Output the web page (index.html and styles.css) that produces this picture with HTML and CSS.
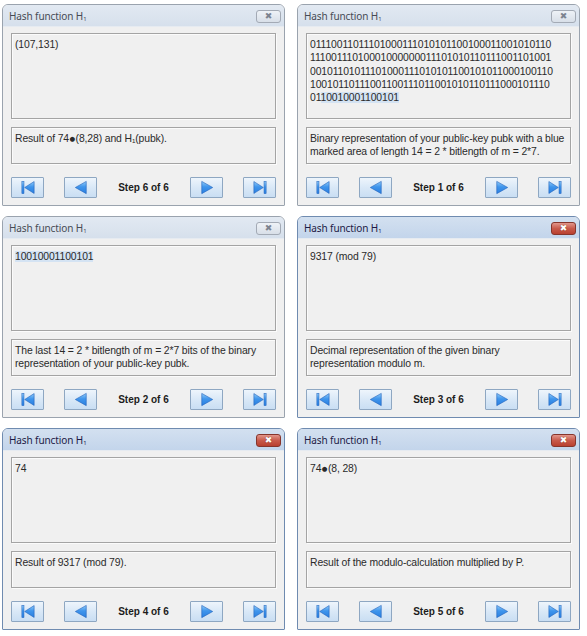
FILE: index.html
```html
<!DOCTYPE html>
<html>
<head>
<meta charset="utf-8">
<link rel="stylesheet" href="styles.css">
</head>
<body>
<svg width="0" height="0" class="defs">
  <defs>
    <linearGradient id="tri" x1="0" y1="0" x2="0" y2="1">
      <stop offset="0" stop-color="#8fcbf9"/>
      <stop offset="0.45" stop-color="#3f95ec"/>
      <stop offset="1" stop-color="#2a7fe0"/>
    </linearGradient>
    <symbol id="i-first" viewBox="0 0 16 16"><rect x="1" y="1" width="2.4" height="14" fill="url(#tri)" stroke="#2464bd" stroke-width="0.6"/><polygon points="4.2,8 15,1.2 15,14.8" fill="url(#tri)" stroke="#2464bd" stroke-width="0.7" stroke-linejoin="round"/></symbol>
    <symbol id="i-prev" viewBox="0 0 16 16"><polygon points="1.5,8 14,1 14,15" fill="url(#tri)" stroke="#2464bd" stroke-width="0.7" stroke-linejoin="round"/></symbol>
    <symbol id="i-next" viewBox="0 0 16 16"><polygon points="14.5,8 2,1 2,15" fill="url(#tri)" stroke="#2464bd" stroke-width="0.7" stroke-linejoin="round"/></symbol>
    <symbol id="i-last" viewBox="0 0 16 16"><polygon points="11.8,8 1,1.2 1,14.8" fill="url(#tri)" stroke="#2464bd" stroke-width="0.7" stroke-linejoin="round"/><rect x="12.6" y="1" width="2.4" height="14" fill="url(#tri)" stroke="#2464bd" stroke-width="0.6"/></symbol>
  </defs>
</svg>
<div class="desk">

  <div class="win">
    <div class="title"><span class="caption">Hash function H<sub class="sub">1</sub></span><span class="close">✖</span></div>
    <div class="box main"><div class="txt">(107,131)</div></div>
    <div class="box desc"><div class="txt">Result of 74<span class="dot">●</span>(8,28) and H₁(pubk).</div></div>
    <div class="nav">
      <button class="btn"><svg class="ico"><use href="#i-first"/></svg></button>
      <button class="btn"><svg class="ico"><use href="#i-prev"/></svg></button>
      <span class="step">Step 6 of 6</span>
      <button class="btn"><svg class="ico"><use href="#i-next"/></svg></button>
      <button class="btn"><svg class="ico"><use href="#i-last"/></svg></button>
    </div>
  </div>

  <div class="win">
    <div class="title"><span class="caption">Hash function H<sub class="sub">1</sub></span><span class="close">✖</span></div>
    <div class="box main"><div class="txt">01110011011101000111010101100100011001010110<br>11100111010001000000011101010110111001101001<br>00101101011101000111010101100101011000100110<br>10010110111001100111011001010110111000101110<br>01<span class="sel">10010001100101</span></div></div>
    <div class="box desc"><div class="txt">Binary representation of your public-key pubk with a blue marked area of length 14 = 2 * bitlength of m = 2*7.</div></div>
    <div class="nav">
      <button class="btn"><svg class="ico"><use href="#i-first"/></svg></button>
      <button class="btn"><svg class="ico"><use href="#i-prev"/></svg></button>
      <span class="step">Step 1 of 6</span>
      <button class="btn"><svg class="ico"><use href="#i-next"/></svg></button>
      <button class="btn"><svg class="ico"><use href="#i-last"/></svg></button>
    </div>
  </div>

  <div class="win">
    <div class="title"><span class="caption">Hash function H<sub class="sub">1</sub></span><span class="close">✖</span></div>
    <div class="box main"><div class="txt"><span class="sel">10010001100101</span></div></div>
    <div class="box desc"><div class="txt">The last 14 = 2 * bitlength of m = 2*7 bits of the binary representation of your public-key pubk.</div></div>
    <div class="nav">
      <button class="btn"><svg class="ico"><use href="#i-first"/></svg></button>
      <button class="btn"><svg class="ico"><use href="#i-prev"/></svg></button>
      <span class="step">Step 2 of 6</span>
      <button class="btn"><svg class="ico"><use href="#i-next"/></svg></button>
      <button class="btn"><svg class="ico"><use href="#i-last"/></svg></button>
    </div>
  </div>

  <div class="win active">
    <div class="title"><span class="caption">Hash function H<sub class="sub">1</sub></span><span class="close">✖</span></div>
    <div class="box main"><div class="txt">9317 (mod 79)</div></div>
    <div class="box desc"><div class="txt">Decimal representation of the given binary<br>representation modulo m.</div></div>
    <div class="nav">
      <button class="btn"><svg class="ico"><use href="#i-first"/></svg></button>
      <button class="btn"><svg class="ico"><use href="#i-prev"/></svg></button>
      <span class="step">Step 3 of 6</span>
      <button class="btn"><svg class="ico"><use href="#i-next"/></svg></button>
      <button class="btn"><svg class="ico"><use href="#i-last"/></svg></button>
    </div>
  </div>

  <div class="win active">
    <div class="title"><span class="caption">Hash function H<sub class="sub">1</sub></span><span class="close">✖</span></div>
    <div class="box main"><div class="txt">74</div></div>
    <div class="box desc"><div class="txt">Result of 9317 (mod 79).</div></div>
    <div class="nav">
      <button class="btn"><svg class="ico"><use href="#i-first"/></svg></button>
      <button class="btn"><svg class="ico"><use href="#i-prev"/></svg></button>
      <span class="step">Step 4 of 6</span>
      <button class="btn"><svg class="ico"><use href="#i-next"/></svg></button>
      <button class="btn"><svg class="ico"><use href="#i-last"/></svg></button>
    </div>
  </div>

  <div class="win active">
    <div class="title"><span class="caption">Hash function H<sub class="sub">1</sub></span><span class="close">✖</span></div>
    <div class="box main"><div class="txt">74<span class="dot">●</span>(8, 28)</div></div>
    <div class="box desc"><div class="txt">Result of the modulo-calculation multiplied by P.</div></div>
    <div class="nav">
      <button class="btn"><svg class="ico"><use href="#i-first"/></svg></button>
      <button class="btn"><svg class="ico"><use href="#i-prev"/></svg></button>
      <span class="step">Step 5 of 6</span>
      <button class="btn"><svg class="ico"><use href="#i-next"/></svg></button>
      <button class="btn"><svg class="ico"><use href="#i-last"/></svg></button>
    </div>
  </div>

</div>
</body>
</html>
```

FILE: styles.css
```css
html, body {
  margin: 0;
  padding: 0;
  background: #ffffff;
}

.defs {
  position: absolute;
  width: 0;
  height: 0;
}

.desk {
  display: grid;
  grid-template-columns: 283px 283px;
  grid-auto-rows: 202px;
  column-gap: 12px;
  row-gap: 10px;
  padding: 4px 0 0 2px;
}

.win {
  box-sizing: border-box;
  height: 202px;
  border: 1px solid #9aa3ae;
  border-radius: 6px 6px 1px 1px;
  background: #f0f0f0;
  display: flex;
  flex-direction: column;
  padding: 0 8px 7px 8px;
  font-family: "Liberation Sans", Arial, sans-serif;
}

.win.active {
  border-color: #6f8bb0;
}

.title {
  height: 21px;
  margin: 0 -8px;
  padding: 0 3px 0 6px;
  display: flex;
  align-items: center;
  justify-content: space-between;
  background: linear-gradient(#e2e9f2, #d6e0ec);
  border-radius: 5px 5px 0 0;
  border-bottom: 1px solid #e6ebf1;
}

.active .title {
  background: linear-gradient(#d3e0f0, #c3d5eb);
}

.caption {
  font-family: "Noto Sans", "Liberation Sans", sans-serif;
  font-size: 10px;
  color: #474b55;
  letter-spacing: -0.1px;
}

.active .caption {
  color: #1d1a46;
}

.sub {
  font-size: 6px;
  vertical-align: -1px;
}

.close {
  box-sizing: border-box;
  width: 25px;
  height: 13px;
  margin-top: 1px;
  border: 1px solid #a3aab5;
  border-radius: 3px;
  background: linear-gradient(#eef2f7, #d8dfe8);
  color: #7c8390;
  font-family: "DejaVu Sans", sans-serif;
  font-size: 9px;
  line-height: 11px;
  text-align: center;
}

.active .close {
  border-color: #86352c;
  background: linear-gradient(#e2968b, #c85a4b 50%, #b9402f);
  color: #ffffff;
  text-shadow: 0 0 1px #6b1f16;
}

.box {
  box-sizing: border-box;
  border: 1px solid #a4a4a4;
  box-shadow: inset 1px 1px 0 #fbfbfb, 1px 1px 0 #fbfbfb;
  background: #f0f0f0;
}

.main {
  height: 86px;
  margin-top: 6px;
}

.desc {
  height: 37px;
  margin-top: 8px;
}

.txt {
  padding: 4px 0 0 3px;
  font-size: 10.4px;
  line-height: 13.3px;
  letter-spacing: -0.12px;
  color: #2a2a2a;
}

.sel {
  background: #d4e3f3;
}

.dot {
  font-family: "DejaVu Sans", sans-serif;
  font-size: 6.5px;
  vertical-align: 1px;
  margin: 0 0.5px;
}

.nav {
  margin-top: 13px;
  display: flex;
  align-items: center;
  gap: 20px;
}

.btn {
  box-sizing: border-box;
  width: 33px;
  height: 21px;
  padding: 0;
  border: 1px solid #8ea7c2;
  border-radius: 1px;
  background: linear-gradient(#eef5fc, #d9e8f7 50%, #c9def3);
  display: flex;
  align-items: center;
  justify-content: center;
}

.ico {
  width: 14px;
  height: 15px;
}

.step {
  flex: 1;
  text-align: center;
  font-size: 10px;
  font-weight: bold;
  color: #1c1c1c;
  margin: 0 -20px;
}
```
